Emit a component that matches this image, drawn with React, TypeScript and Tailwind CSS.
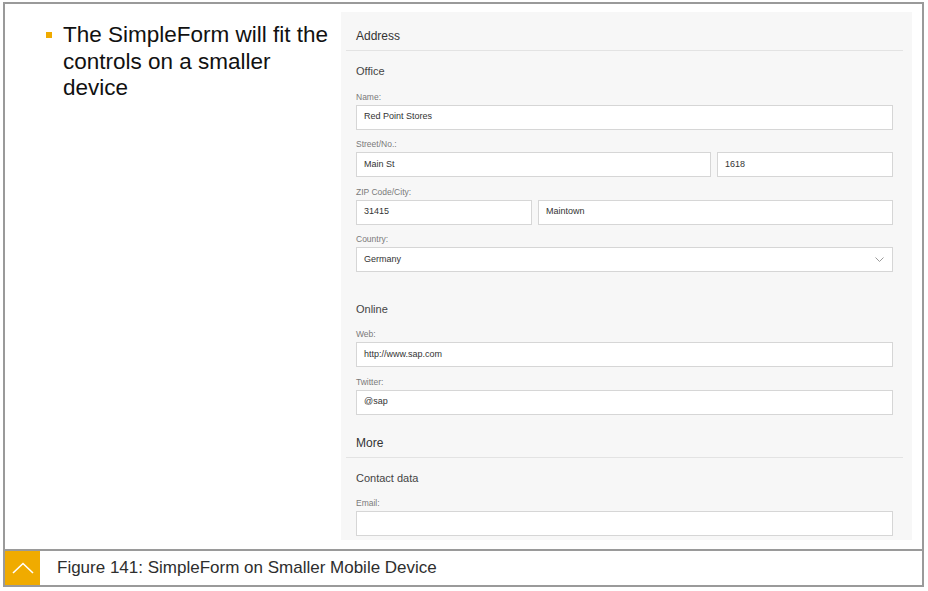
import React from "react";

const font = { fontFamily: '"Liberation Sans", Arial, sans-serif' };

const Header = ({ title }: { title: string }) => (
  <div className="ml-[5px] mr-[9px] h-[39px] border-b border-[#e3e3e3] pl-[10px] pb-[6px] flex items-end">
    <span className="text-[12px] leading-[16px] text-[#333]">{title}</span>
  </div>
);

const Field = ({ label, first, children }: { label: string; first?: boolean; children: React.ReactNode }) => (
  <div className={first ? "mt-[13.5px]" : "mt-[9.5px]"}>
    <div className="text-[8.5px] leading-[10px] text-[#7a7a7a] mb-[3px]">{label}</div>
    {children}
  </div>
);

const Input = ({ value, className = "" }: { value?: string; className?: string }) => (
  <div className={`h-[25px] border border-[#d6d6d6] bg-white pl-[7px] flex items-center text-[9px] text-[#333] ${className}`}>
    {value}
  </div>
);

const App = () => {
  return (
    <div className="w-[928px] h-[591px] bg-white overflow-hidden pt-[2px] pl-[3px]" style={font}>
      <div className="w-[921px] h-[585px] border-2 border-[#9a9a9a] flex flex-col">
        <div className="h-[545px] flex">
          <div className="w-[336px] pl-[41px] pt-[18px] flex items-start">
            <span className="mt-[10px] w-[6px] h-[6px] bg-[#f0ab00] shrink-0" />
            <p className="ml-[11px] w-[270px] text-[22.5px] leading-[26.5px] text-[#111]">
              The SimpleForm will fit the controls on a smaller device
            </p>
          </div>

          <div className="mt-[8px] w-[571px] h-[528px] bg-[#f7f7f7]">
            <Header title="Address" />
            <div className="pl-[15px] pr-[19px]">
              <div className="mt-[13px] text-[11px] leading-[14px] text-[#444]">Office</div>
              <Field label="Name:" first>
                <Input value="Red Point Stores" />
              </Field>
              <Field label="Street/No.:">
                <div className="flex gap-[6px]">
                  <Input value="Main St" className="flex-1" />
                  <Input value="1618" className="w-[176px]" />
                </div>
              </Field>
              <Field label="ZIP Code/City:">
                <div className="flex gap-[6px]">
                  <Input value="31415" className="w-[176px]" />
                  <Input value="Maintown" className="flex-1" />
                </div>
              </Field>
              <Field label="Country:">
                <div className="h-[25px] border border-[#d6d6d6] bg-white pl-[7px] pr-[8px] flex items-center justify-between text-[9px] text-[#333]">
                  <span>Germany</span>
                  <svg width="9" height="5" viewBox="0 0 9 5">
                    <polyline points="0.5,0.5 4.5,4.5 8.5,0.5" fill="none" stroke="#9a9a9a" strokeWidth="1" />
                  </svg>
                </div>
              </Field>

              <div className="mt-[29.5px] text-[11px] leading-[14px] text-[#444]">Online</div>
              <Field label="Web:" first>
                <Input value="http://www.sap.com" />
              </Field>
              <Field label="Twitter:">
                <Input value="@sap" />
              </Field>
            </div>

            <div className="mt-[4px]">
              <Header title="More" />
            </div>
            <div className="pl-[15px] pr-[19px]">
              <div className="mt-[13px] text-[11px] leading-[14px] text-[#444]">Contact data</div>
              <Field label="Email:" first>
                <Input />
              </Field>
            </div>
          </div>
        </div>

        <div className="h-[36px] border-t-2 border-[#9a9a9a] flex items-stretch">
          <div className="w-[35px] bg-[#f0ab00] flex items-center justify-center">
            <svg width="22" height="12" viewBox="0 0 22 12">
              <polyline points="1,11 11,1.5 21,11" fill="none" stroke="#ffffff" strokeWidth="1.6" />
            </svg>
          </div>
          <div className="ml-[17px] flex items-center text-[17px] text-[#2e2e2e]">
            Figure 141: SimpleForm on Smaller Mobile Device
          </div>
        </div>
      </div>
    </div>
  );
};

export default App;
